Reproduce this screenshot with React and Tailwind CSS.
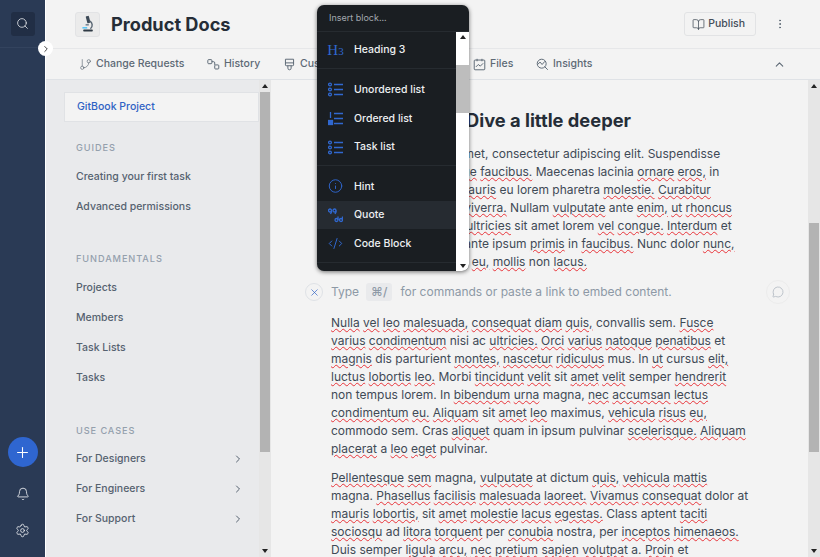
import { BookOpen, Bell, ChevronRight, ChevronUp, CodeXml, EllipsisVertical, GitBranch, Info, MessageCircle, Plus, Search, Settings, X } from "lucide-react";

const FONT = "[font-family:Inter,'Liberation_Sans',sans-serif]";

// words starting with * get the red spellcheck squiggle
function Line({ text }) {
  return (
    <div className="whitespace-nowrap">
      {text.split(" ").map((w, i) => {
        const marked = w.startsWith("*");
        return (
          <span key={i}>
            {i > 0 && " "}
            {marked ? (
              <span className="underline decoration-wavy decoration-[#e8343a] decoration-1 underline-offset-[1px]">{w.slice(1)}</span>
            ) : (
              w
            )}
          </span>
        );
      })}
    </div>
  );
}

const firstPara = [
  "Lorem ipsum dolor sit amet, consectetur adipiscing elit. Suspendisse",
  "varius enim in eros *neque *faucibus. Maecenas lacinia *ornare *eros, in",
  "eget dolor aliquet nec *mauris eu lorem pharetra *molestie. *Curabitur",
  "at lorem sed nunc eros *viverra. Nullam *vulputate ante *enim, *ut *rhoncus",
  "mauris sed nisl tellus in *ultricies sit amet lorem *vel *congue. *Interdum et",
  "malesuada fames ac in ante ipsum *primis in *faucibus. Nunc dolor *nunc,",
  "sagittis vitae turpis risus *eu, *mollis non *lacus.",
];

const secondPara = [
  "*Nulla *vel *leo *malesuada, *consequat *diam *quis, convallis sem. *Fusce",
  "*varius *condimentum nisi ac *ultricies. *Orci *varius *natoque *penatibus et",
  "*magnis dis parturient *montes, *nascetur *ridiculus mus. In *ut cursus *elit,",
  "*luctus *lobortis *leo. Morbi *tincidunt *velit sit *amet *velit semper *hendrerit",
  "non tempus lorem. In *bibendum *urna magna, *nec *accumsan *lectus",
  "*condimentum *eu. *Aliquam sit *amet *leo maximus, *vehicula *risus *eu,",
  "commodo sem. Cras *aliquet quam in ipsum pulvinar *scelerisque. *Aliquam",
  "*placerat a *leo *eget pulvinar.",
];

const thirdPara = [
  "*Pellentesque *sem magna, *vulputate at dictum *quis, *vehicula *mattis",
  "magna. *Phasellus *facilisis *malesuada *laoreet. *Vivamus *consequat dolor at",
  "*mauris *lobortis, sit *amet *molestie *lacus *egestas. Class aptent *taciti",
  "*sociosqu ad *litora *torquent per *conubia nostra, per *inceptos *himenaeos.",
  "Duis semper *ligula *arcu, *nec *pretium *sapien *volutpat a. *Proin et",
];

function Microscope() {
  return (
    <svg viewBox="0 0 20 24" className="h-[20px] w-[16px]">
      <rect x="8" y="2" width="4" height="9" rx="1" fill="#3d4a57" transform="rotate(-15 10 6)" />
      <path d="M12 8a6 6 0 0 1 1 10" fill="none" stroke="#5b6875" strokeWidth="1.8" />
      <rect x="7" y="12" width="4" height="2" fill="#7a8794" />
      <rect x="4" y="19" width="12" height="2.4" rx="1" fill="#2f3a45" />
      <rect x="3" y="16" width="6" height="1.6" fill="#38bdf8" />
    </svg>
  );
}

function HistoryIcon() {
  return (
    <svg viewBox="0 0 16 16" className="size-[13px]" fill="none" stroke="currentColor" strokeWidth="1.2">
      <rect x="1" y="2" width="5" height="5" rx="1" />
      <rect x="9.5" y="8.5" width="5" height="5" rx="1" />
      <path d="M6 4.5h2a1.5 1.5 0 0 1 1.5 1.5v2.500" />
    </svg>
  );
}

function CustomizeIcon() {
  return (
    <svg viewBox="0 0 16 16" className="size-[13px]" fill="none" stroke="currentColor" strokeWidth="1.2">
      <path d="M3 1.500h10v7a1 1 0 0 1-1 1H4a1 1 0 0 1-1-1z" />
      <path d="M3 6h10M6 9.500v3a2 2 0 0 0 4 0v-3" />
    </svg>
  );
}

function FilesIcon() {
  return (
    <svg viewBox="0 0 16 16" className="size-[13px]" fill="none" stroke="currentColor" strokeWidth="1.2">
      <rect x="1.500" y="2.500" width="13" height="12" rx="1" />
      <path d="M5 1v3M11 1v3M3.500 11l3-3 2.500 2 3.500-3.500" />
    </svg>
  );
}

function InsightsIcon() {
  return (
    <svg viewBox="0 0 16 16" className="size-[13px]" fill="none" stroke="currentColor" strokeWidth="1.2">
      <circle cx="7" cy="7" r="5.500" />
      <path d="M2 8l3-3 2.500 3L11 4M10.500 10.500l4 4" />
    </svg>
  );
}

function ListIcon({ top }) {
  return (
    <svg viewBox="0 0 15 15" className="size-[15px]" fill="none" stroke="#3068d0" strokeWidth="1.300">
      <path d="M6 2.500h9M6 7.500h9M6 12.500h9" />
      {top === "ordered" ? (
        <>
          <path d="M2.500 1v6" />
          <rect x="0.500" y="9.500" width="4" height="4" fill="#3068d0" />
        </>
      ) : (
        <>
          <circle cx="2" cy="2.500" r="1.400" />
          <circle cx="2" cy="7.500" r="1.400" />
          <circle cx="2" cy="12.500" r="1.400" />
        </>
      )}
    </svg>
  );
}

function QuoteIcon() {
  return (
    <svg viewBox="0 0 15 15" className="size-[15px]" fill="none" stroke="#3068d0" strokeWidth="1.300">
      <circle cx="2" cy="2.500" r="1.500" />
      <circle cx="6.500" cy="2.500" r="1.500" />
      <path d="M3.500 2.500v1.500L2.500 6M8 2.500v1.500L7 6" />
      <circle cx="8.500" cy="12" r="1.500" />
      <circle cx="13" cy="12" r="1.500" />
      <path d="M10 12V8.500M14.500 12V8.500" />
    </svg>
  );
}

function MenuRow({ icon, label, active }) {
  return (
    <div className={`flex h-[28.600px] items-center gap-[11px] pl-[11px] ${active ? "bg-[#262b31]" : ""}`}>
      <span className="flex w-[15px] shrink-0 justify-center">{icon}</span>
      <span className="text-[10.500px] font-medium text-[#eef0f2]">{label}</span>
    </div>
  );
}

function ArrowUp() {
  return <div className="size-0 border-x-[3.500px] border-b-[4px] border-x-transparent border-b-[#222]" />;
}

function ArrowDown() {
  return <div className="size-0 border-x-[3.500px] border-t-[4px] border-x-transparent border-t-[#222]" />;
}

function InsertMenu() {
  return (
    <div className="absolute left-[317px] top-[5px] z-20 flex h-[266px] w-[152px] flex-col overflow-hidden rounded-[7px] bg-[#1a1e22] shadow-[0_1px_4px_rgba(0,0,0,0.55)]">
      <div className="flex h-[27px] shrink-0 items-center border-b border-[#262b30] pl-[12px] text-[9px] text-[#a3a9b0]">
        Insert block...
      </div>
      <div className="flex min-h-0 flex-1">
        <div className="flex-1 overflow-hidden">
          <div className="flex h-[37px] flex-col justify-center border-b border-[#262b30]">
            <MenuRow
              label="Heading 3"
              icon={
                <span className="font-['Liberation_Serif',serif] text-[15px] leading-none text-[#3068d0]">
                  H<span className="text-[11px]">3</span>
                </span>
              }
            />
          </div>
          <div className="flex h-[97px] flex-col justify-center border-b border-[#262b30] pt-[3px]">
            <MenuRow label="Unordered list" icon={<ListIcon />} />
            <MenuRow label="Ordered list" icon={<ListIcon top="ordered" />} />
            <MenuRow label="Task list" icon={<ListIcon />} />
          </div>
          <div className="flex h-[97px] flex-col justify-center border-b border-[#262b30] pt-[2px]">
            <MenuRow label="Hint" icon={<Info size={16} strokeWidth={1.5} color="#3068d0" />} />
            <MenuRow label="Quote" icon={<QuoteIcon />} active />
            <MenuRow label="Code Block" icon={<CodeXml size={15} strokeWidth={1.6} color="#3068d0" />} />
          </div>
        </div>
        <div className="flex w-[13px] shrink-0 flex-col items-center justify-between bg-white py-[3px]">
          <ArrowUp />
          <div className="mb-auto mt-[26px] h-[48px] w-full bg-[#bdbdbd]" />
          <ArrowDown />
        </div>
      </div>
    </div>
  );
}

function Scrollbar({ thumbTop, thumbHeight }) {
  return (
    <div className="relative flex w-[12px] shrink-0 flex-col items-center justify-between bg-[#e6e6e6] py-[4px]">
      <ArrowUp />
      <div className="absolute inset-x-[1px] bg-[#b3b3b3]" style={{ top: thumbTop, height: thumbHeight }} />
      <ArrowDown />
    </div>
  );
}

function Tab({ icon, label, className = "" }) {
  return (
    <div className={`flex items-center gap-[4px] text-[#5d6975] ${className}`}>
      {icon}
      <span className="text-[10.500px] font-medium">{label}</span>
    </div>
  );
}

function SideItem({ label, arrow }) {
  return (
    <div className="flex h-[30px] items-center justify-between pr-[15px] text-[10.500px] font-medium text-[#566270]">
      {label}
      {arrow && <ChevronRight size={12} strokeWidth={2} />}
    </div>
  );
}

function SideHeading({ label }) {
  return <div className="flex h-[30px] items-center text-[9.200px] font-medium tracking-[0.1em] text-[#94a0ac]">{label}</div>;
}

export default function App() {
  return (
    <div className={`relative flex h-[557px] w-[820px] overflow-hidden bg-[#f3f3f3] ${FONT}`}>
      {/* left rail */}
      <div className="relative flex w-[46px] shrink-0 flex-col items-center border-r border-white bg-[#2a3a55]">
        <div className="flex h-[48px] w-full items-center justify-center border-b border-[#33435e]">
          <div className="flex size-[24px] items-center justify-center rounded-[3px] bg-[#212e45]">
            <Search size={13} color="#e5e7eb" strokeWidth={1.5} />
          </div>
        </div>
        <div className="mt-auto flex size-[30px] items-center justify-center rounded-full bg-[#2f66d0]">
          <Plus size={17} color="white" strokeWidth={1.5} />
        </div>
        <Bell size={14} color="#e5e7eb" strokeWidth={1.5} className="mt-[20px]" />
        <Settings size={15} color="#e5e7eb" strokeWidth={1.4} className="mb-[19px] mt-[22px]" />
        <div className="absolute left-[38px] top-[41px] z-10 flex size-[15px] items-center justify-center rounded-full bg-white">
          <ChevronRight size={10} color="#333" strokeWidth={2.2} />
        </div>
      </div>

      <div className="flex min-w-0 flex-1 flex-col">
        {/* title bar */}
        <div className="flex h-[49px] shrink-0 items-center border-b border-[#e6e7e9] pl-[29px] pr-[34px]">
          <div className="flex size-[25px] items-center justify-center rounded-[3px] border border-[#e2e3e5] bg-[#ebebeb]">
            <Microscope />
          </div>
          <div className="ml-[11px] mt-[1px] text-[18.200px] font-bold text-[#252d37]">Product Docs</div>
          <div className="ml-auto flex h-[24px] items-center gap-[3px] rounded-[3px] border border-[#e2e3e5] pl-[7px] pr-[10px] text-[10.500px] font-medium text-[#444e59]">
            <BookOpen size={13} strokeWidth={1.4} />
            Publish
          </div>
          <EllipsisVertical size={12} color="#5d6975" className="ml-[18px]" />
        </div>

        {/* tabs */}
        <div className="flex h-[31px] shrink-0 items-center border-b border-[#dfe2e6] pl-[33px] pr-[34px]">
          <Tab className="w-[128px]" icon={<GitBranch size={13} strokeWidth={1.2} />} label="Change Requests" />
          <Tab className="w-[76px]" icon={<HistoryIcon />} label="History" />
          <Tab className="w-[190px]" icon={<CustomizeIcon />} label="Customize" />
          <Tab className="w-[63px]" icon={<FilesIcon />} label="Files" />
          <Tab icon={<InsightsIcon />} label="Insights" />
          <ChevronUp size={13} color="#5d6975" strokeWidth={2} className="ml-auto" />
        </div>

        <div className="flex min-h-0 flex-1">
          {/* docs sidebar */}
          <div className="flex w-[225px] shrink-0 bg-[#e9eaec]">
            <div className="min-w-0 flex-1 pl-[18px] pt-[12px]">
              <div className="flex h-[30px] items-center border border-[#e0e2e5] bg-[#f3f3f3] pl-[12px] text-[10.500px] font-medium text-[#2f62c4]">
                GitBook Project
              </div>
              <div className="pl-[12px]">
                <div className="mt-[11px]">
                  <SideHeading label="GUIDES" />
                </div>
                <div className="mt-[-1px]">
                  <SideItem label="Creating your first task" />
                  <SideItem label="Advanced permissions" />
                </div>
                <div className="mt-[22px]">
                  <SideHeading label="FUNDAMENTALS" />
                </div>
                <div className="mt-[-1px]">
                  <SideItem label="Projects" />
                  <SideItem label="Members" />
                  <SideItem label="Task Lists" />
                  <SideItem label="Tasks" />
                </div>
                <div className="mt-[23px]">
                  <SideHeading label="USE CASES" />
                </div>
                <div className="mt-[-2px]">
                  <SideItem label="For Designers" arrow />
                  <SideItem label="For Engineers" arrow />
                  <SideItem label="For Support" arrow />
                </div>
              </div>
            </div>
            <Scrollbar thumbTop={12} thumbHeight={360} />
          </div>

          {/* page content */}
          <div className="flex min-w-0 flex-1">
            <div className="relative min-w-0 flex-1 overflow-hidden pl-[60px] text-[12px] leading-[18px] text-[#3f4a56]">
              <div className="pl-[135px] pt-[27px] text-[18.300px] font-bold leading-[26px] text-[#252d37]">Dive a little deeper</div>
              <div className="mt-[12px]">
                {firstPara.map((l) => (
                  <Line key={l} text={l} />
                ))}
              </div>
              <div className="relative mt-[9px] flex h-[24px] items-center text-[#8d99a6]">
                <div className="absolute left-[-26px] flex size-[18px] items-center justify-center rounded-full border border-[#dfe2e6]">
                  <X size={11} color="#2f62c4" strokeWidth={1.5} />
                </div>
                Type
                <span className="ml-[7px] mr-[8px] flex h-[18px] items-center rounded-[3px] bg-[#e9eaec] px-[5px] font-medium">⌘/</span>
                for commands or paste a link to embed content.
                <div className="absolute left-[435px] flex size-[24px] items-center justify-center rounded-full border border-[#ececec]">
                  <MessageCircle size={12} color="#a7b0ba" strokeWidth={1.4} />
                </div>
              </div>
              <div className="mt-[10px]">
                {secondPara.map((l) => (
                  <Line key={l} text={l} />
                ))}
              </div>
              <div className="mt-[11px]">
                {thirdPara.map((l) => (
                  <Line key={l} text={l} />
                ))}
              </div>
            </div>
            <Scrollbar thumbTop={143} thumbHeight={229} />
          </div>
        </div>
      </div>

      <InsertMenu />
    </div>
  );
}
